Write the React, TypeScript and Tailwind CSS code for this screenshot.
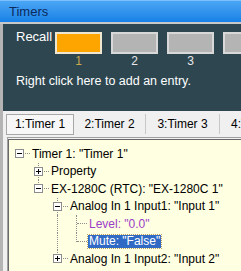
import React from "react";

type Row = {
  level: number;
  cols: ("none" | "full")[]; // ancestor columns
  own: "full" | "top" | "root";
  box?: "plus" | "minus";
  text: string;
  kind?: "level" | "selected";
};

const rows: Row[] = [
  { level: 0, cols: [], own: "root", box: "minus", text: 'Timer 1: "Timer 1"' },
  { level: 1, cols: ["none"], own: "full", box: "plus", text: "Property" },
  { level: 1, cols: ["none"], own: "top", box: "minus", text: 'EX-1280C (RTC): "EX-1280C 1"' },
  { level: 2, cols: ["none", "none"], own: "full", box: "minus", text: 'Analog In 1 Input1: "Input 1"' },
  { level: 3, cols: ["none", "none", "full"], own: "full", text: 'Level: "0.0"', kind: "level" },
  { level: 3, cols: ["none", "none", "full"], own: "top", text: 'Mute: "False"', kind: "selected" },
  { level: 2, cols: ["none", "none"], own: "top", box: "plus", text: 'Analog In 1 Input2: "Input 2"' },
];

function Box({ type }: { type: "plus" | "minus" }) {
  return (
    <div className="absolute left-[5px] top-[4px] w-[9px] h-[9px] border border-[#8c8c8c] bg-white flex items-center justify-center z-10">
      <div className="relative w-[5px] h-[5px]">
        <div className="absolute left-0 top-[2px] w-[5px] h-[1px] bg-black" />
        {type === "plus" && <div className="absolute left-[2px] top-0 w-[1px] h-[5px] bg-black" />}
      </div>
    </div>
  );
}

function TreeRow({ row }: { row: Row }) {
  return (
    <div className="flex h-[17.5px] items-center">
      {row.cols.map((c, i) => (
        <div key={i} className="relative w-[19px] h-full shrink-0">
          {c === "full" && (
            <div className="absolute left-[9px] top-0 bottom-0 border-l border-dotted border-[#8c8c8c]" />
          )}
        </div>
      ))}
      <div className="relative w-[19px] h-full shrink-0">
        {row.own === "full" && (
          <div className="absolute left-[9px] top-0 bottom-0 border-l border-dotted border-[#8c8c8c]" />
        )}
        {row.own === "top" && (
          <div className="absolute left-[9px] top-0 h-[9px] border-l border-dotted border-[#8c8c8c]" />
        )}
        <div className="absolute left-[10px] top-[8px] w-[10px] border-t border-dotted border-[#8c8c8c]" />
        {row.box && <Box type={row.box} />}
      </div>
      <div className="ml-[2px] flex items-center">
        {row.kind === "selected" ? (
          <span className="bg-[#316ac5] text-white px-[1px] leading-[13px] outline outline-1 outline-dotted outline-[#c0a060]">
            {row.text}
          </span>
        ) : (
          <span className={row.kind === "level" ? "text-[#9a40c8] px-[1px]" : "text-black px-[1px]"}>{row.text}</span>
        )}
      </div>
    </div>
  );
}

export default function App() {
  const font = { fontFamily: '"Liberation Sans", Arial, sans-serif' };
  return (
    <div
      className="w-[241px] h-[271px] overflow-hidden flex flex-col bg-[#d4d0c8] text-[12px]"
      style={font}
    >
      {/* Title bar */}
      <div className="h-[22px] shrink-0 bg-gradient-to-b from-[#4aa6f4] to-[#1581e6] border-t border-[#7cc0ff] flex items-center pl-[9px]">
        <span className="text-[13px] text-[#0c2a5c]">Timers</span>
      </div>
      <div className="h-[2px] shrink-0 bg-[#c8c8c8]" />
      <div className="flex flex-1 min-h-0">
        <div className="w-[3px] shrink-0 bg-[#b4b4b4]" />
        <div className="flex-1 flex flex-col min-w-0">
          {/* Dark recall panel */}
          <div className="h-[87px] shrink-0 bg-[#2d4650] pl-[13px] pt-[5px] flex flex-col">
            <div className="flex">
              <span className="text-white text-[13px] w-[39px] shrink-0 leading-[15px]">Recall</span>
              <div className="flex gap-[9px] pt-[3px]">
                {[1, 2, 3, 4].map((n) => (
                  <div key={n} className="flex flex-col items-center w-[47px] shrink-0">
                    <div
                      className={
                        n === 1
                          ? "w-[47px] h-[22px] border-[2px] border-[#efe6d2] bg-[#ffa500]"
                          : "w-[47px] h-[22px] border-[2px] border-[#d8d8d8] bg-[#b4b4b4]"
                      }
                    />
                    <span
                      className={
                        n === 1
                          ? "text-[#c9a94a] text-[12px] leading-[13px] mt-[1px]"
                          : "text-[#e8e8e8] text-[12px] leading-[13px] mt-[1px]"
                      }
                    >
                      {n}
                    </span>
                  </div>
                ))}
              </div>
            </div>
            <div className="text-white text-[12.5px] mt-[6px] leading-[15px]">Right click here to add an entry.</div>
          </div>
          {/* Tabs */}
          <div className="h-[26px] shrink-0 bg-[#f0f0f0] flex items-center pl-[3px] text-[12px] text-black">
            <div className="w-[68px] h-[21px] border border-[#a8a8a8] bg-[#f7f7f7] flex items-center justify-center shrink-0">
              1:Timer 1
            </div>
            <div className="w-[72px] h-[20px] border-r border-[#c8c8c8] flex items-center justify-center shrink-0">
              2:Timer 2
            </div>
            <div className="w-[74px] h-[20px] border-r border-[#c8c8c8] flex items-center justify-center shrink-0">
              3:Timer 3
            </div>
            <div className="pl-[11px] shrink-0">4:Timer 4</div>
          </div>
          {/* Tree */}
          <div className="flex-1 bg-[#f0f0f0] pl-[4px]">
            <div className="h-full border-l border-t border-[#a0a0a0] pt-[1px]">
              <div className="h-full border-l border-t border-[#696969] bg-[#ffffe1] pt-[5px] pl-[1px]">
                {rows.map((r, i) => (
                  <TreeRow key={i} row={r} />
                ))}
              </div>
            </div>
          </div>
        </div>
      </div>
    </div>
  );
}
